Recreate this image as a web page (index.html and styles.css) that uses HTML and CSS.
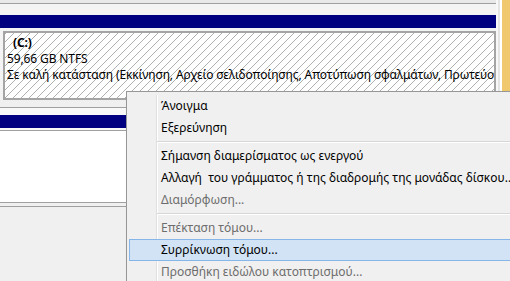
FILE: index.html
```html
<!DOCTYPE html>
<html lang="el">
<head>
  <meta charset="UTF-8">
  <title>Διαχείριση δίσκων</title>
  <link rel="stylesheet" href="styles.css">
</head>
<body>
  <div class="screen">
    <div class="pane">
      <div class="top-strip"></div>
      <div class="disk first">
        <div class="disk-bar"></div>
        <div class="volume hatched">
          <div class="vol-name">(C:)</div>
          <div>59,66 GB NTFS</div>
          <div>Σε καλή κατάσταση (Εκκίνηση, Αρχείο σελιδοποίησης, Αποτύπωση σφαλμάτων, Πρωτεύον διαμέρισμα)</div>
        </div>
      </div>
      <div class="disk second">
        <div class="disk-bar"></div>
        <div class="volume plain"></div>
      </div>
      <div class="disk third"></div>
    </div>
    <div class="edge"></div>
    <div class="accent"></div>

    <ul class="menu">
      <li>Άνοιγμα</li>
      <li>Εξερεύνηση</li>
      <li class="sep"></li>
      <li>Σήμανση διαμερίσματος ως ενεργού</li>
      <li>Αλλαγή  του γράμματος ή της διαδρομής της μονάδας δίσκου...</li>
      <li class="disabled">Διαμόρφωση...</li>
      <li class="sep"></li>
      <li class="disabled">Επέκταση τόμου...</li>
      <li class="active">Συρρίκνωση τόμου...</li>
      <li class="disabled">Προσθήκη ειδώλου κατοπτρισμού...</li>
    </ul>
  </div>
</body>
</html>
```

FILE: styles.css
```css
body {
  margin: 0;
  background-color: #f0f0f0;
  font-family: 'Noto Sans', 'Open Sans', sans-serif;
  font-size: 12px;
  color: #000;
}
.screen {
  position: relative;
  display: flex;
  width: 510px;
  height: 281px;
  overflow: hidden;
}
.pane {
  width: 496px;
  flex-shrink: 0;
}
.top-strip {
  height: 3px;
  background-color: #e9e9e9;
  border-bottom: 1px solid #a0a0a0;
}
.disk-bar {
  height: 13px;
  background-color: #000080;
}
.disk.first {
  padding-top: 11px;
  background-color: #f4f4f4;
}
.disk.first .disk-bar {
  margin-bottom: 3px;
}
.disk.second {
  margin-top: 7px;
  border-top: 1px solid #a0a0a0;
  padding-top: 7px;
  background-color: #f8f8f8;
}
.disk.second .disk-bar {
  margin-bottom: 2px;
}
.disk.third {
  margin-top: 3px;
  border-top: 1px solid #a0a0a0;
}
.volume {
  box-sizing: border-box;
}
.hatched {
  margin-left: 3px;
  height: 69px;
  padding: 2px 0 0 2px;
  border: 2px solid #a4a4a4;
  background-color: #fff;
  background-image: repeating-linear-gradient(135deg, #b0b0b0 0, #b0b0b0 1px, #fff 1px, #fff 5.657px);
  line-height: 16px;
  letter-spacing: -0.12px;
  white-space: nowrap;
  overflow: hidden;
}
.vol-name {
  font-weight: bold;
  padding-left: 6px;
}
.plain {
  height: 73px;
  background-color: #fff;
  border-top: 1px solid #a0a0a0;
  border-bottom: 1px solid #a0a0a0;
}
.edge {
  width: 6px;
  flex-shrink: 0;
  background: linear-gradient(90deg, #f8f8f8 0, #f8f8f8 2px, #e4e4e4 2px, #e4e4e4 4px, #fff 4px);
}
.accent {
  flex: 1;
  background-color: #f0c96e;
}
.menu {
  position: absolute;
  left: 126px;
  top: 91px;
  width: 420px;
  margin: 0;
  padding: 3px 2px;
  list-style: none;
  background-color: #f0f0f0;
  border: 1px solid #979797;
  box-shadow: 2px 2px 3px rgba(0, 0, 0, 0.2);
}
.menu::before {
  content: '';
  position: absolute;
  left: 29px;
  top: 3px;
  bottom: 3px;
  width: 1px;
  background-color: #e0e0e0;
  border-right: 1px solid #fff;
}
.menu li {
  position: relative;
  height: 20px;
  line-height: 20px;
  padding-left: 31px;
  border: 1px solid transparent;
  white-space: pre;
}
.menu li.disabled {
  color: #6d6d6d;
}
.menu li.active {
  background-color: #d1e3f5;
  border-color: #86b6e9;
}
.menu li.sep {
  height: 6px;
  border: none;
  padding: 0;
}
.menu li.sep::after {
  content: '';
  position: absolute;
  left: 28px;
  right: 0;
  top: 2px;
  height: 1px;
  background-color: #d7d7d7;
  border-bottom: 1px solid #fff;
}
```
